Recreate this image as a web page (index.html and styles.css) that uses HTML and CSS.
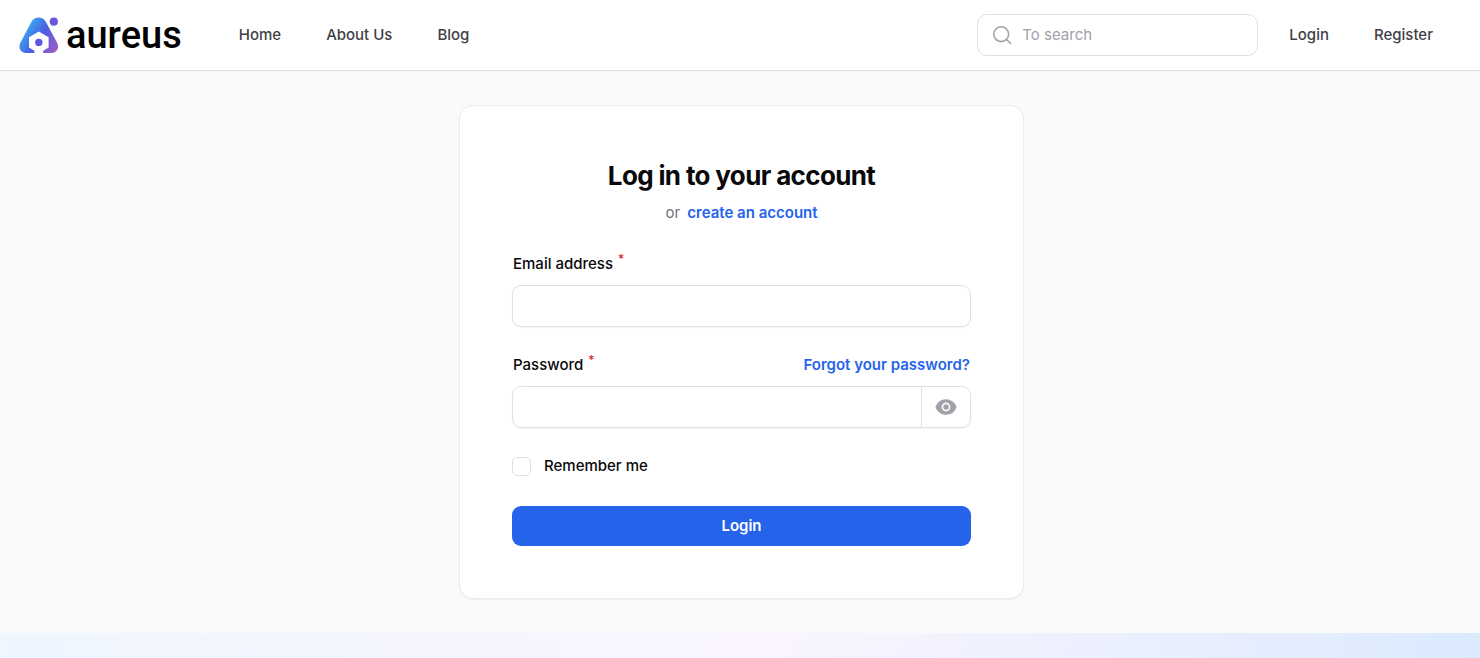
FILE: index.html
```
<!DOCTYPE html>
<html lang="en">

<head>
    <meta charset="UTF-8">
    <meta name="viewport" content="width=device-width, initial-scale=1">
    <title>Login - Aureus</title>
    <link rel="stylesheet" href="styles.css">
</head>

<body>
    <header class="header">
        <a class="logo" href="#">
            <svg class="logo-mark" width="40" height="38" viewBox="0 0 40 38" aria-hidden="true">
                <defs>
                    <linearGradient id="logoGradient" x1="0" y1="0.3" x2="1" y2="0.9">
                        <stop offset="0" stop-color="#35bdf0"/>
                        <stop offset="0.5" stop-color="#4a5fe3"/>
                        <stop offset="1" stop-color="#a05cc4"/>
                    </linearGradient>
                </defs>
                <path fill="url(#logoGradient)" d="M12.700 5.300C14.200 2.900 16.600 1.500 19.600 1.500s5.400 1.400 6.900 3.800l11.600 21.400c2.600 5-.2 10.300-5.600 10.300h-8.300v-2.300l5.400-3.200V21.200L19.800 15.500l-9.800 5.700v10.300l5.400 3.200V37H7C1.600 37-1.200 31.700 1.400 26.700z"/>
                <circle cx="19.800" cy="26.400" r="3.700" fill="#5a58dc"/>
                <circle cx="34.800" cy="5.700" r="4.100" fill="#6a58dc"/>
            </svg>
            <span class="logo-text">aureus</span>
        </a>
        <nav class="nav">
            <a href="#">Home</a>
            <a href="#">About Us</a>
            <a href="#">Blog</a>
        </nav>
        <label class="search">
            <svg width="20" height="20" viewBox="0 0 20 20" fill="none" stroke="#a1a1aa" stroke-width="1.600" stroke-linecap="round" aria-hidden="true">
                <circle cx="9.200" cy="9.200" r="7.400"/>
                <path d="M14.500 14.500L18.500 18.500"/>
            </svg>
            <input type="search" placeholder="To search" aria-label="To search">
        </label>
        <nav class="nav">
            <a href="#">Login</a>
            <a href="#">Register</a>
        </nav>
    </header>

    <main class="main">
        <form class="card">
            <div class="card-header">
                <h1>Log in to your account</h1>
                <p>or <a class="link" href="#">create an account</a></p>
            </div>

            <div class="field">
                <div class="field-label">
                    <label for="email">Email address<sup>*</sup></label>
                </div>
                <div class="input-wrap">
                    <input type="email" id="email">
                </div>
            </div>

            <div class="field">
                <div class="field-label">
                    <label for="password">Password<sup>*</sup></label>
                    <a class="link" href="#">Forgot your password?</a>
                </div>
                <div class="input-wrap">
                    <input type="password" id="password">
                    <button class="reveal" type="button" aria-label="Show password">
                        <svg width="22" height="22" viewBox="0 0 20 20" fill="#a1a1aa" aria-hidden="true">
                            <path d="M10 12.500a2.500 2.500 0 1 0 0-5 2.500 2.500 0 0 0 0 5Z"/>
                            <path fill-rule="evenodd" d="M.664 10.590a1.651 1.651 0 0 1 0-1.186A10.004 10.004 0 0 1 10 3c4.257 0 7.893 2.660 9.336 6.410.147.381.146.804 0 1.186A10.004 10.004 0 0 1 10 17c-4.257 0-7.893-2.660-9.336-6.410ZM14 10a4 4 0 1 1-8 0 4 4 0 0 1 8 0Z" clip-rule="evenodd"/>
                        </svg>
                    </button>
                </div>
            </div>

            <label class="remember">
                <input type="checkbox">
                <span>Remember me</span>
            </label>

            <button class="submit" type="submit">Login</button>
        </form>
    </main>

    <footer class="footer"></footer>
</body>

</html>
```

FILE: styles.css
```
:root {
    --primary-color: #2563eb;
    --border: #e0e0e2;
    --text: #09090b;
    --muted: #71717a;
    --background: #fafafa;
}

* {
    box-sizing: border-box;
}

body {
    font-family: Inter, "Liberation Sans", sans-serif;
    font-size: 15px;
    line-height: 24px;
    color: var(--text);
    background: var(--background);
    margin: 0;
    min-height: 100vh;
    display: flex;
    flex-direction: column;
}

a {
    text-decoration: none;
}

input,
button {
    font: inherit;
    color: inherit;
}

/* header */
.header {
    display: flex;
    align-items: center;
    min-height: 71px;
    padding: 0 25px 0 19px;
    background: #fff;
    border-bottom: 1px solid var(--border);
}

.logo {
    display: flex;
    align-items: center;
    gap: 7px;
    margin-right: 35px;
    color: #000;
}

.logo-text {
    font-family: Roboto, sans-serif;
    font-size: 38px;
    font-weight: 500;
    line-height: 40px;
}

.nav {
    display: flex;
    gap: 1px;
}

.nav a {
    padding: 8px 22px;
    font-weight: 500;
    color: #3f3f46;
}

.search {
    display: flex;
    align-items: center;
    gap: 10px;
    width: 281px;
    height: 42px;
    margin-left: auto;
    margin-right: 9px;
    padding: 0 14px;
    border: 1px solid var(--border);
    border-radius: 10px;
}

.search input {
    flex: 1;
    min-width: 0;
    padding: 0;
    border: none;
    outline: none;
    background: transparent;
}

.search input::placeholder {
    color: #a1a1aa;
}

/* login card */
.main {
    display: flex;
    justify-content: center;
    padding: 34px 16px 34px 19px;
}

.card {
    width: 100%;
    max-width: 565px;
    padding: 52px;
    background: #fff;
    border: 1px solid #ececee;
    border-radius: 14px;
    box-shadow: 0 1px 2px rgba(0, 0, 0, 0.05);
}

.card-header {
    margin-bottom: 27px;
    text-align: center;
}

h1 {
    margin: 0 0 7px;
    font-size: 26px;
    font-weight: 700;
    line-height: 36px;
    letter-spacing: -0.025em;
}

p {
    margin: 0;
    color: var(--muted);
}

.link {
    font-weight: 600;
    color: var(--primary-color);
}

p .link {
    margin-left: 3px;
}

.field {
    margin-bottom: 26px;
}

.field-label {
    display: flex;
    justify-content: space-between;
    margin-bottom: 9px;
    padding: 0 1px;
    font-weight: 500;
}

sup {
    margin-left: 5px;
    font-size: 12px;
    line-height: 0;
    color: #dc2626;
}

.input-wrap {
    display: flex;
    height: 42px;
    border: 1px solid var(--border);
    border-radius: 9px;
    box-shadow: 0 1px 1px rgba(0, 0, 0, 0.04);
}

.input-wrap input {
    flex: 1;
    min-width: 0;
    padding: 0 13px;
    border: none;
    outline: none;
    background: transparent;
}

.input-wrap:focus-within {
    border-color: var(--primary-color);
}

.reveal {
    display: flex;
    align-items: center;
    padding: 0 13px;
    border: none;
    border-left: 1px solid var(--border);
    background: transparent;
    cursor: pointer;
}

.remember {
    display: flex;
    align-items: center;
    gap: 13px;
    margin-bottom: 28px;
    font-weight: 500;
}

.remember input {
    appearance: none;
    width: 19px;
    height: 19px;
    margin: 0;
    border: 1px solid var(--border);
    border-radius: 5px;
    background: #fff;
}

.remember input:checked {
    background: var(--primary-color);
}

.submit {
    display: block;
    width: 100%;
    height: 40px;
    border: none;
    border-radius: 9px;
    font-weight: 600;
    color: #fff;
    background: var(--primary-color);
    cursor: pointer;
}

.footer {
    flex: 1;
    min-height: 24px;
    background: linear-gradient(105deg, #eff6ff, #faf5ff 52%, #dbeafe);
}
```
